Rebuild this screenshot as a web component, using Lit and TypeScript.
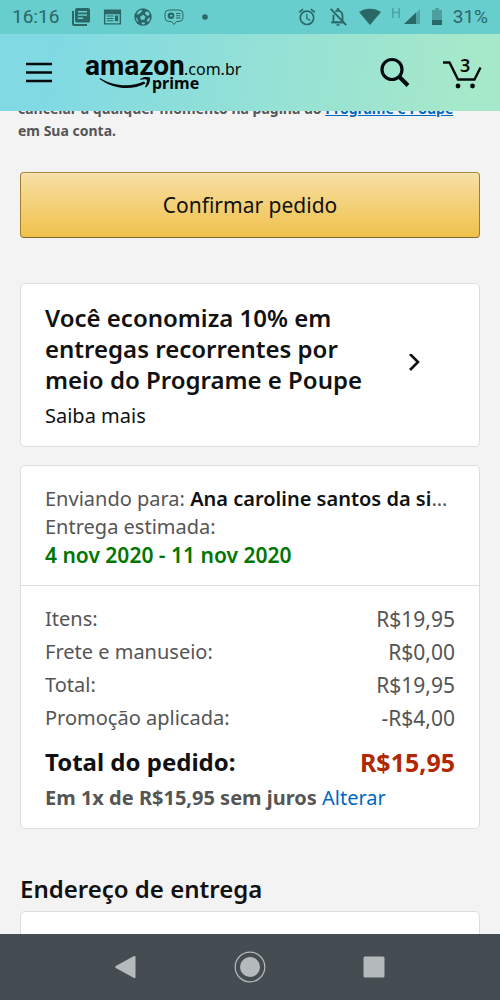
import { LitElement, html, css, svg } from "lit";
import { customElement } from "lit/decorators.js";

@customElement("status-bar")
class StatusBar extends LitElement {
  static styles = css`
    :host {
      display: flex;
      justify-content: space-between;
      align-items: center;
      height: 34px;
      padding: 0 12px;
      background: #68cdcd;
      color: #2a6867;
      font: 19px/34px Roboto, sans-serif;
    }
    .group {
      display: flex;
      align-items: center;
      gap: 10px;
    }
    .left {
      gap: 12px;
    }
    svg {
      display: block;
      fill: currentColor;
    }
    .line {
      fill: none;
      stroke: currentColor;
    }
  `;
  render() {
    return html`
      <div class="group left">
        <span>16:16</span>
        <svg width="20" height="20" viewBox="0 0 20 20">
          <path d="M1 4h2v13h13v2H3a2 2 0 0 1-2-2z" />
          <path fill-rule="evenodd" d="M6 1h11a2 2 0 0 1 2 2v11a1.500 1.500 0 0 1-2 1.500H6a2 2 0 0 1-2-2V3a2 2 0 0 1 2-2zM7 4v1.600h9V4zM7 7.200v1.600h9V7.200zM7 10.400V12h5v-1.600z" />
        </svg>
        <svg width="19" height="20" viewBox="0 0 20 20">
          <path fill-rule="evenodd" d="M1 2h18v16H1zM2.500 7v9.500h15V7z" />
          <path d="M4 8.500h7v1H4zM12.500 8.500H16v6h-3.500zM4 11h7v1H4zM4 13.500h7v1H4z" />
        </svg>
        <svg width="18" height="18" viewBox="0 0 18 18">
          <circle cx="9" cy="9" r="8.700" />
          <g fill="#68cdcd">
            <path d="M5 2.500 8.500 2 7 4.500 4 6.500 2.500 6zM11 4l3-.5 1.800 2.500-1.800 2-2.500-1.500zM6 9l3-2.200 2.500 2-1.200 3H7zM1.800 9.500l1.600 1 .6 3-1 .3zM14 10.500l2-1-.5 3-2 1.400-.7-1.500zM8 14.500h2.500l.5 1.200-1.700.7-1.800-.5z" />
          </g>
        </svg>
        <svg width="20" height="18" viewBox="0 0 20 18">
          <path class="line" stroke-width="1" d="M5 2h10a4 4 0 0 1 4 4v3.500a4 4 0 0 1-4 4h-2.500L10 16.500l-2.500-3H5a4 4 0 0 1-4-4V6a4 4 0 0 1 4-4z" />
          <path fill-rule="evenodd" d="M7 4.500a3.300 3.300 0 1 1 0 6.600 3.300 3.300 0 0 1 0-6.600zM6 7v1.500h2.500V7z" />
          <path d="M12 5h4.500v1H12zM12 7.200h4.500v1H12zM12 9.400h4.500v1H12z" />
        </svg>
        <svg width="20" height="20" viewBox="0 0 20 20"><circle cx="9" cy="10" r="2.800" /></svg>
      </div>
      <div class="group">
        <svg width="20" height="20" viewBox="0 0 24 24">
          <path d="M22 5.720l-4.600-3.860-1.290 1.530 4.600 3.860L22 5.720zM7.880 3.390L6.600 1.860 2 5.710l1.290 1.530 4.590-3.850zM12.500 8H11v6l4.750 2.850.750-1.230-4-2.370V8zM12 4c-4.970 0-9 4.030-9 9s4.020 9 9 9a9 9 0 0 0 0-18zm0 16c-3.870 0-7-3.130-7-7s3.130-7 7-7 7 3.130 7 7-3.130 7-7 7z" />
        </svg>
        <svg width="22" height="20" viewBox="1 1 22 22">
          <path class="line" stroke-width="2" d="M4 3l17 18M9.200 6C11 4.800 13 4.800 14.700 6 16.500 7.200 17 9 17 11v5M7 9.500V18h11" />
          <path d="M10.500 5V3.500a1.500 1.500 0 0 1 3 0V5zM4.500 17H19v2H4.500zM10 20h4a2 2 0 0 1-4 0z" />
        </svg>
        <svg width="22" height="18" viewBox="0 0 22 18"><path d="M0 4C6-.5 16-.5 22 4L11 17z" /></svg>
        <svg width="30" height="20" viewBox="0 0 30 20">
          <path opacity=".4" d="M1 1h1.600v3.700h4.800V1H9v10H7.400V6.300H2.600V11H1zM29 2v15h-4V6z" />
          <path d="M13 17 25 5.500V17z" />
        </svg>
        <svg width="12" height="20" viewBox="0 0 12 20">
          <path opacity=".45" d="M1 3h3V1h4v2h3v10H1z" />
          <path d="M1 13h10v5H1z" />
        </svg>
        <span>31%</span>
      </div>
    `;
  }
}

@customElement("store-header")
class StoreHeader extends LitElement {
  static styles = css`
    :host {
      display: flex;
      align-items: center;
      height: 77px;
      padding: 0 18px 0 24px;
      background: linear-gradient(100deg, #80d9e3 10%, #a6e8ca 92%);
    }
    button {
      border: 0;
      padding: 0;
      background: none;
      color: #050b0c;
    }
    svg {
      display: block;
      overflow: visible;
    }
    .brand {
      margin: 0 auto 0 32px;
      color: #04090a;
    }
    .search {
      margin-right: 31px;
    }
    .amazon {
      font: bold 28px Roboto, sans-serif;
    }
    .domain {
      font: 16px "Noto Sans", sans-serif;
    }
    .prime {
      font: bold 16px "Noto Sans", sans-serif;
    }
    .count {
      font: 600 18px "Noto Sans", sans-serif;
    }
  `;
  render() {
    return html`
      <button aria-label="Menu">
        <svg width="30" height="30" viewBox="0 0 30 30">
          <path stroke="currentColor" stroke-width="2.600" d="M2 6h26M2 14.500h26M2 23h26" />
        </svg>
      </button>
      <a class="brand" href="#" aria-label="amazon.com.br prime">
        <svg width="158" height="44" viewBox="0 0 158 44" fill="currentColor">
          <text class="amazon" x="-1" y="24">amazon</text>
          <text class="domain" x="98" y="24">.com.br</text>
          <text class="prime" x="66" y="38">prime</text>
          <path d="M14 27C28 36 46 36 58 30.500L59.500 32.500C45 40 27 38 13.500 28z" />
          <path d="M54 28c3-2.300 7-2.600 10-1.500.5 3.500-1 7.500-4 10l-1-.6c1.200-2.500 2.400-5.500 1.700-7.200-1.500-.8-4-.4-6.500 0z" />
        </svg>
      </a>
      <button class="search" aria-label="Buscar">
        <svg width="32" height="32" viewBox="0 0 32 32" fill="none" stroke="currentColor">
          <circle cx="13" cy="12.500" r="10" stroke-width="3.200" />
          <path stroke-width="4" d="M20 19.500l9 9" />
        </svg>
      </button>
      <button aria-label="Carrinho">
        <svg width="40" height="34" viewBox="0 0 40 34">
          <path fill="none" stroke="currentColor" stroke-width="2.400" d="M1 6.500h6.500l8.500 17h16.500l6-12" />
          <circle cx="16" cy="30" r="2.400" fill="currentColor" />
          <circle cx="30.500" cy="30" r="2.400" fill="currentColor" />
          <text class="count" x="18" y="16" fill="currentColor">3</text>
        </svg>
      </button>
    `;
  }
}

@customElement("order-page")
class OrderPage extends LitElement {
  static styles = css`
    :host {
      display: block;
      flex: 1;
      min-height: 0;
      overflow: hidden;
      padding: 0 20px;
      color: #111;
      font: 20px/28px "Noto Sans", sans-serif;
    }
    a {
      color: #0066c0;
      text-decoration: none;
    }
    p,
    h2 {
      margin: 0;
    }
    .notice {
      margin: -13px -2px 30px;
      color: #555;
      font-size: 14px;
      line-height: 22px;
      font-weight: 700;
    }
    .notice a {
      text-decoration: underline;
    }
    .confirm {
      display: block;
      width: 100%;
      height: 66px;
      border: 1px solid;
      border-color: #a88734 #9c7e31 #846a29;
      border-radius: 4px;
      background: linear-gradient(#f7dfa5, #f0c14b);
      box-shadow: inset 0 1px 0 rgba(255, 255, 255, 0.4);
      color: #111;
      font: inherit;
      font-size: 21px;
    }
    .card {
      border: 1px solid #ddd;
      border-radius: 5px;
      background: #fff;
    }
    .offer {
      display: flex;
      align-items: center;
      justify-content: space-between;
      margin: 45px 0 18px;
      padding: 18px 58px 20px 24px;
      color: #111;
    }
    h2 {
      font-size: 24px;
      line-height: 32px;
      font-weight: 600;
    }
    .offer h2 {
      line-height: 31px;
    }
    .offer p {
      margin-top: 7px;
      line-height: 28px;
      margin-bottom: -4px;
    }
    .chevron {
      flex: none;
    }
    .shipping {
      padding: 19px 24px 16px;
      border-bottom: 1px solid #ddd;
      color: #555;
      white-space: nowrap;
    }
    .shipping b {
      color: #111;
      font-weight: 600;
    }
    .shipping .date {
      color: #007600;
      font-size: 21px;
      font-weight: 600;
    }
    .totals {
      padding: 16px 24px;
    }
    table {
      width: 100%;
      border-collapse: collapse;
      color: #555;
    }
    th,
    td {
      padding: 0;
      height: 33px;
      font-weight: 400;
      text-align: left;
    }
    td {
      font-size: 21px;
      text-align: right;
    }
    .grand th,
    .grand td {
      height: 44px;
      padding-top: 6px;
      color: #111;
      font-size: 24px;
      font-weight: 700;
    }
    .grand td {
      color: #b12704;
      font-size: 25px;
    }
    .terms {
      color: #555;
    }
    .terms b {
      font-weight: 700;
    }
    .section {
      margin: 44px 0 6px;
    }
    .address {
      height: 80px;
    }
  `;
  rows = [
    ["Itens:", "R$19,95"],
    ["Frete e manuseio:", "R$0,00"],
    ["Total:", "R$19,95"],
    ["Promoção aplicada:", "-R$4,00"],
  ];
  render() {
    return html`
      <p class="notice">
        cancelar a qualquer momento na página do <a href="#">Programe e Poupe</a><br />
        em Sua conta.
      </p>
      <button class="confirm">Confirmar pedido</button>
      <a class="card offer" href="#">
        <div>
          <h2>Você economiza 10% em<br />entregas recorrentes por<br />meio do Programe e Poupe</h2>
          <p>Saiba mais</p>
        </div>
        <svg class="chevron" width="14" height="20" viewBox="0 0 14 20" fill="none" stroke="#111" stroke-width="2.600">
          <path d="M3 0l8 8-8 8" />
        </svg>
      </a>
      <section class="card">
        <div class="shipping">
          <p>Enviando para: <b>Ana caroline santos da si</b>…</p>
          <p>Entrega estimada:</p>
          <p class="date">4 nov 2020 - 11 nov 2020</p>
        </div>
        <div class="totals">
          <table>
            ${this.rows.map(([k, v]) => html`<tr><th scope="row">${k}</th><td>${v}</td></tr>`)}
            <tr class="grand"><th scope="row">Total do pedido:</th><td>R$15,95</td></tr>
          </table>
          <p class="terms"><b>Em 1x de R$15,95 sem juros</b> <a href="#">Alterar</a></p>
        </div>
      </section>
      <h2 class="section">Endereço de entrega</h2>
      <section class="card address"></section>
    `;
  }
}

@customElement("system-nav")
class SystemNav extends LitElement {
  static styles = css`
    :host {
      display: flex;
      justify-content: space-around;
      align-items: center;
      height: 66px;
      padding: 0 12.5%;
      background: #454d52;
    }
    button {
      border: 0;
      padding: 0;
      background: none;
      color: #b5babc;
    }
    svg {
      display: block;
      fill: currentColor;
    }
  `;
  button(label: string, shape: unknown) {
    return html`<button aria-label=${label}>
      <svg width="32" height="32" viewBox="0 0 32 32">${shape}</svg>
    </button>`;
  }
  render() {
    return html`
      ${this.button("Voltar", svg`<path d="M6.800 15 25 5q1.500-.5 1.500 1v20q0 1.500-1.500 1L6.800 17q-1.500-1 0-2z" />`)}
      ${this.button("Início", svg`<circle cx="16" cy="16" r="10" /><circle cx="16" cy="16" r="14.800" fill="none" stroke="currentColor" stroke-width="1.200" />`)}
      ${this.button("Recentes", svg`<rect x="4.500" y="5.500" width="21" height="21" rx="1.500" />`)}
    `;
  }
}

@customElement("app-root")
class AppRoot extends LitElement {
  static styles = css`
    :host {
      display: flex;
      flex-direction: column;
      height: 100vh;
      background: #f3f3f3;
    }
  `;
  render() {
    return html`
      <status-bar></status-bar>
      <store-header></store-header>
      <order-page></order-page>
      <system-nav></system-nav>
    `;
  }
}
